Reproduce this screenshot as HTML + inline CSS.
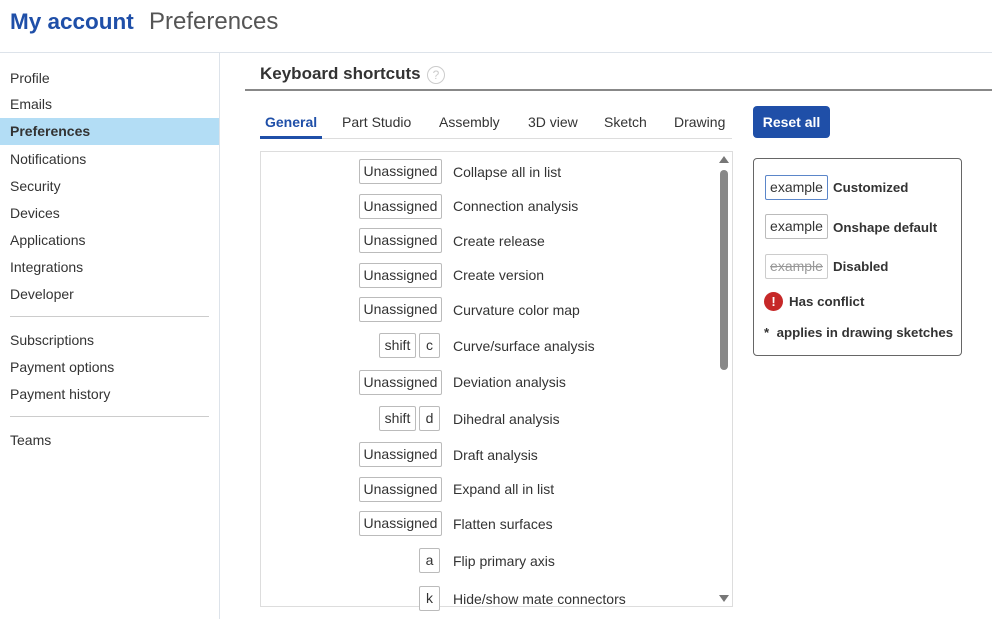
<!DOCTYPE html>
<html><head><style>
*{margin:0;padding:0;box-sizing:border-box}
body{width:992px;height:619px;background:#fff;font-family:"Liberation Sans",sans-serif;color:#333;position:relative;overflow:hidden;font-size:14px}
.a{position:absolute;white-space:nowrap}
.side{font-size:14px;color:#333;left:10px}
.k{position:absolute;border:1px solid #bbb;border-radius:2px;height:25px;line-height:23px;font-size:14px;color:#333;text-align:center;background:#fff}
.lbl{position:absolute;left:453px;font-size:14px;color:#333}
.tab{position:absolute;top:114px;font-size:14px;color:#333}
.lg{font-weight:bold;font-size:13.3px}
</style></head><body>
<div class="a" style="left:10px;top:9px;font-size:22.5px;font-weight:bold;color:#1f4fa8">My account</div>
<div class="a" style="left:149px;top:8px;font-size:24px;color:#555">Preferences</div>
<div class="a" style="left:0;top:52px;width:992px;height:1px;background:#dde3ea"></div>
<div class="a" style="left:219px;top:53px;width:1px;height:566px;background:#dde3ea"></div>
<div class="a" style="left:0;top:118px;width:219px;height:27px;background:#b3ddf5"></div>
<div class="a side" style="top:70px">Profile</div>
<div class="a side" style="top:96px">Emails</div>
<div class="a side" style="top:123px;font-weight:bold">Preferences</div>
<div class="a side" style="top:151px">Notifications</div>
<div class="a side" style="top:178px">Security</div>
<div class="a side" style="top:205px">Devices</div>
<div class="a side" style="top:232px">Applications</div>
<div class="a side" style="top:259px">Integrations</div>
<div class="a side" style="top:286px">Developer</div>
<div class="a" style="left:10px;top:316px;width:199px;height:1px;background:#ccc"></div>
<div class="a side" style="top:332px">Subscriptions</div>
<div class="a side" style="top:359px">Payment options</div>
<div class="a side" style="top:386px">Payment history</div>
<div class="a" style="left:10px;top:416px;width:199px;height:1px;background:#ccc"></div>
<div class="a side" style="top:432px">Teams</div>

<div class="a" style="left:260px;top:64px;font-size:17px;font-weight:bold;color:#333">Keyboard shortcuts</div>
<div class="a" style="left:427px;top:66px;width:18px;height:18px;border:1px solid #ccc;border-radius:50%;color:#ccc;font-size:12px;text-align:center;line-height:16px">?</div>
<div class="a" style="left:245px;top:89px;width:747px;height:2px;background:#888"></div>

<div class="tab" style="left:265px;color:#1f4fa8;font-weight:bold">General</div>
<div class="tab" style="left:342px">Part Studio</div>
<div class="tab" style="left:439px">Assembly</div>
<div class="tab" style="left:528px">3D view</div>
<div class="tab" style="left:604px">Sketch</div>
<div class="tab" style="left:674px">Drawing</div>
<div class="a" style="left:260px;top:138px;width:472px;height:1px;background:#ddd"></div>
<div class="a" style="left:260px;top:136px;width:62px;height:3px;background:#1f4fa8"></div>

<div class="a" style="left:753px;top:106px;width:77px;height:32px;background:#1f4fa8;border-radius:4px;color:#fff;font-size:14px;font-weight:bold;text-align:center;line-height:32px">Reset all</div>

<div class="a" style="left:260px;top:151px;width:473px;height:456px;border:1px solid #ddd"></div>
<div class="a" style="left:719px;top:156px;width:0;height:0;border-left:5px solid transparent;border-right:5px solid transparent;border-bottom:7px solid #777"></div>
<div class="a" style="left:720px;top:170px;width:8px;height:200px;background:#888;border-radius:4px"></div>
<div class="a" style="left:719px;top:595px;width:0;height:0;border-left:5px solid transparent;border-right:5px solid transparent;border-top:7px solid #777"></div>

<div class="k" style="left:359px;top:159px;width:83px">Unassigned</div><div class="lbl" style="top:164px">Collapse all in list</div>
<div class="k" style="left:359px;top:194px;width:83px">Unassigned</div><div class="lbl" style="top:198px">Connection analysis</div>
<div class="k" style="left:359px;top:228px;width:83px">Unassigned</div><div class="lbl" style="top:233px">Create release</div>
<div class="k" style="left:359px;top:263px;width:83px">Unassigned</div><div class="lbl" style="top:267px">Create version</div>
<div class="k" style="left:359px;top:297px;width:83px">Unassigned</div><div class="lbl" style="top:302px">Curvature color map</div>
<div class="k" style="left:379px;top:333px;width:37px">shift</div><div class="k" style="left:419px;top:333px;width:21px">c</div><div class="lbl" style="top:338px">Curve/surface analysis</div>
<div class="k" style="left:359px;top:370px;width:83px">Unassigned</div><div class="lbl" style="top:374px">Deviation analysis</div>
<div class="k" style="left:379px;top:406px;width:37px">shift</div><div class="k" style="left:419px;top:406px;width:21px">d</div><div class="lbl" style="top:411px">Dihedral analysis</div>
<div class="k" style="left:359px;top:442px;width:83px">Unassigned</div><div class="lbl" style="top:447px">Draft analysis</div>
<div class="k" style="left:359px;top:477px;width:83px">Unassigned</div><div class="lbl" style="top:481px">Expand all in list</div>
<div class="k" style="left:359px;top:511px;width:83px">Unassigned</div><div class="lbl" style="top:516px">Flatten surfaces</div>
<div class="k" style="left:419px;top:548px;width:21px">a</div><div class="lbl" style="top:553px">Flip primary axis</div>
<div class="k" style="left:419px;top:586px;width:21px">k</div><div class="lbl" style="top:591px">Hide/show mate connectors</div>

<div class="a" style="left:753px;top:158px;width:209px;height:198px;border:1px solid #666;border-radius:4px"></div>
<div class="k" style="left:765px;top:175px;width:63px;border-color:#5b86c9">example</div><div class="a lg" style="left:833px;top:180px">Customized</div>
<div class="k" style="left:765px;top:214px;width:63px">example</div><div class="a lg" style="left:833px;top:220px">Onshape default</div>
<div class="k" style="left:765px;top:254px;width:63px;color:#999;text-decoration:line-through;border-color:#ccc">example</div><div class="a lg" style="left:833px;top:259px">Disabled</div>
<div class="a" style="left:764px;top:292px;width:19px;height:19px;border-radius:50%;background:#c62828;color:#fff;font-weight:bold;font-size:13px;text-align:center;line-height:19px">!</div>
<div class="a lg" style="left:789px;top:294px">Has conflict</div>
<div class="a lg" style="left:764px;top:325px">* &nbsp;applies in drawing sketches</div>
</body></html>
